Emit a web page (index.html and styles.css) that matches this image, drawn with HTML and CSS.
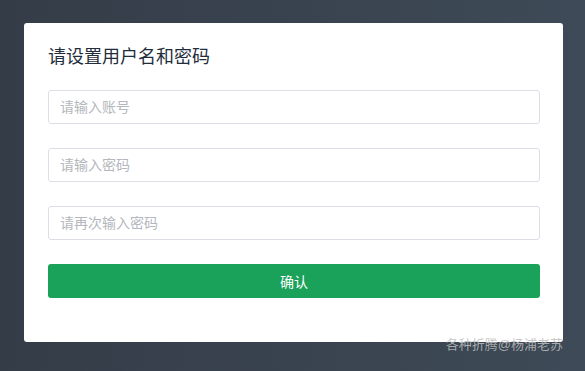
FILE: index.html
```html
<!DOCTYPE html>
<html lang="zh-CN">

<head>
    <meta charset="UTF-8">
    <meta name="viewport" content="width=device-width, initial-scale=1.0">
    <title>设置用户名和密码</title>
    <link rel="stylesheet" href="styles.css">
</head>

<body>
    <div class="card">
        <h2 class="title">请设置用户名和密码</h2>
        <form class="form">
            <input class="field" type="text" placeholder="请输入账号">
            <input class="field" type="password" placeholder="请输入密码">
            <input class="field" type="password" placeholder="请再次输入密码">
            <button class="btn" type="button">确认</button>
        </form>
    </div>
    <div class="mark">各种折腾@杨浦老苏</div>
</body>

</html>
```

FILE: styles.css
```css
* {
    margin: 0;
    padding: 0;
    box-sizing: border-box;
}

html {
    height: 100%;
}

body {
    height: 100%;
    overflow: hidden;
    padding: 23px 22px 0 24px;
    font-family: "Liberation Sans", "Noto Sans CJK SC", sans-serif;
    background-color: #39424e;
    background-image: linear-gradient(90deg, #343c47, #3e4a57);
}

.card {
    width: 539px;
    height: 319px;
    background-color: #fff;
    border-radius: 3px;
    padding: 22px 23px 0 24px;
}

.title {
    font-size: 18px;
    font-weight: normal;
    color: #1f2d3d;
    line-height: 24px;
}

.form {
    display: flex;
    flex-direction: column;
    gap: 24px;
    margin-top: 21px;
}

.field {
    height: 34px;
    border: 1px solid #dcdfe6;
    border-radius: 3px;
    padding: 0 11px;
    font-size: 14px;
    font-family: inherit;
    color: #606266;
    outline: none;
}

.field::placeholder {
    color: #b4b7bd;
}

.btn {
    height: 34px;
    border: 0;
    border-radius: 3px;
    background-color: #1aa15a;
    color: #fff;
    font-size: 14px;
    font-weight: normal;
    font-family: inherit;
}

.mark {
    position: absolute;
    right: 22px;
    bottom: 18px;
    font-size: 13px;
    color: rgba(190, 190, 190, 0.85);
}
```
